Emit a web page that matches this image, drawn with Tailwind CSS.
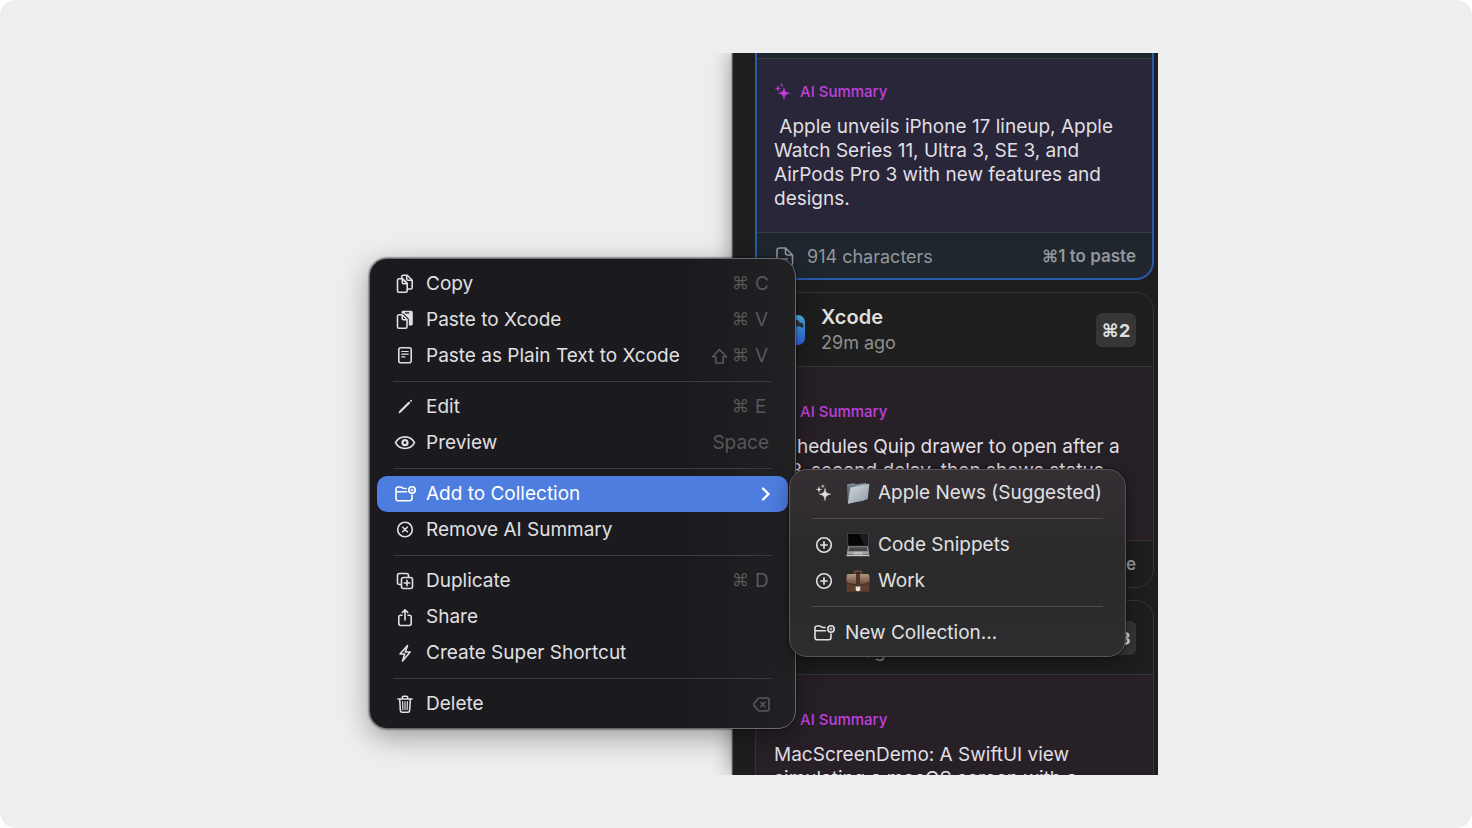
<!DOCTYPE html>
<html lang="en">
<head>
    <meta charset="UTF-8">
    <meta name="viewport" content="width=device-width, initial-scale=1.0">
    <title>Clipboard - Add to Collection</title>
    <script src="https://cdn.jsdelivr.net/npm/@tailwindcss/browser@4"></script>
</head>
<body class="bg-white font-['Inter',sans-serif]">

    <!-- Shared icons -->
    <svg class="absolute h-0 w-0" aria-hidden="true">
        <symbol id="sparkles" viewBox="0 0 16 18">
            <path d="M9 4.500c.5 4 1.500 5 5.600 5.700C10.500 11 9.500 12 9 16.500 8.500 12 7.500 11 3.400 10.200 7.500 9.500 8.500 8.500 9 4.500z" fill="currentColor" stroke="currentColor" stroke-width=".6"/>
            <path d="M3 2.800c.3 1.900.7 2.400 2.600 2.700C3.700 5.800 3.300 6.300 3 8.200 2.700 6.300 2.300 5.800.4 5.500 2.300 5.200 2.700 4.700 3 2.800z" fill="currentColor" stroke="currentColor" stroke-width=".4"/>
            <path d="M6.800.4c.2 1.200.5 1.500 1.700 1.700-1.200.2-1.500.5-1.700 1.700-.2-1.200-.5-1.500-1.700-1.700C6.300 1.900 6.600 1.600 6.800.4z" fill="currentColor" stroke="currentColor" stroke-width=".3"/>
        </symbol>
        <symbol id="folder-plus" viewBox="0 0 24 24">
            <path d="M13 6.500h-2.200c-.7 0-1-.2-1.500-.7-.6-.6-1-.8-1.800-.8H5.200C3.800 5 3 5.800 3 7.200v9.300C3 18 3.800 18.800 5.300 18.800h11.500c1.500 0 2.200-.8 2.200-2.200V13M3 9.800h10.500" fill="none" stroke="currentColor" stroke-width="1.600" stroke-linecap="round" stroke-linejoin="round"/>
            <circle cx="19" cy="8" r="3.200" fill="none" stroke="currentColor" stroke-width="1.600"/>
            <path d="M19 6.600v2.800M17.600 8h2.800" stroke="currentColor" stroke-width="1"/>
        </symbol>
        <symbol id="circle-plus" viewBox="0 0 24 24">
            <circle cx="12" cy="12" r="7.300" fill="none" stroke="currentColor" stroke-width="1.600"/>
            <path d="M12 8.900v6.200M8.900 12h6.200" stroke="currentColor" stroke-width="1.700" stroke-linecap="round"/>
        </symbol>
        <symbol id="doc" viewBox="0 0 18 20">
            <path d="M1 16.500v-13C1 1.900 1.900 1 3.500 1h6L16.500 8v8.500c0 1.600-.9 2.500-2.500 2.500H3.500C1.900 19 1 18.100 1 16.500zM9.500 1v5c0 1.300.7 2 2 2h5M5 12h7M5 15h7" fill="none" stroke="currentColor" stroke-width="1.600" stroke-linejoin="round"/>
        </symbol>
        <linearGradient id="xcode-bg" x1="0" y1="0" x2="0" y2="1">
            <stop offset="0" stop-color="#4db8ea"/>
            <stop offset="1" stop-color="#2f5fe0"/>
        </linearGradient>
        <symbol id="xcode" viewBox="0 0 32 32">
            <rect x="1" y="1" width="30" height="30" rx="7" fill="url(#xcode-bg)"/>
            <path d="M10 9c4-4 11-5 15-2l1 2 2-.5 2 3.500-2 2-2.500-2-2.500 1-2-3-8 1z" fill="#2c3440"/>
            <path d="M17 11l3 2-11 15-3-2z" fill="#20262e"/>
        </symbol>
    </svg>

    <main class="flex h-screen min-h-96 justify-center rounded-2xl bg-[#eeeeee] py-[53px]">
        <div class="relative w-full max-w-[844px] overflow-hidden">

            <!-- Clipboard history -->
            <section class="ml-auto flow-root h-full w-[426px] overflow-hidden border-l border-[#5c5c5c] bg-[#1e1e1e] pr-1 pl-[22px] shadow-[0_0_20px_rgba(0,0,0,0.4),0_0_1px_#000]">
                <div class="-mt-[69px] flex flex-col gap-3">

                    <article class="overflow-hidden rounded-[18px] bg-[#1f262e] outline-2 -outline-offset-2 outline-[#2a59ab]">
                        <header class="flex h-[75px] items-center border-b border-[#363c44] px-[19px]">
                            <h2 class="text-[20px] font-semibold text-[#dedede]">Safari</h2>
                        </header>
                        <div class="h-[174px] border-b border-[#3a3945] bg-[#282638] px-[19px] pt-[23px]">
                            <h3 class="flex items-center gap-[9px] pl-px text-[15px] leading-5 font-medium text-[#c140dd]">
                                <svg class="h-[18px] w-4"><use href="#sparkles"/></svg>AI Summary
                            </h3>
                            <p class="mt-[13px] text-[19px] leading-6 whitespace-nowrap text-[#e0dfe3]">&nbsp;Apple unveils iPhone 17 lineup, Apple<br>Watch Series 11, Ultra 3, SE 3, and<br>AirPods Pro 3 with new features and<br>designs.</p>
                        </div>
                        <footer class="flex h-[47px] items-center pr-[18px] pl-[21px] text-[#93979b]">
                            <svg class="mr-[13px] h-5 w-[18px]"><use href="#doc"/></svg>
                            <span class="text-[18px]">914 characters</span>
                            <span class="ml-auto text-[17px] font-semibold">⌘1 to paste</span>
                        </footer>
                    </article>

                    <article class="overflow-hidden rounded-[18px] bg-[#1e1e1e] outline-1 -outline-offset-1 outline-[#353535]">
                        <header class="flex h-[75px] items-center border-b border-[#353535] pt-[2px] pr-[18px] pl-[19px]">
                            <svg class="mr-[15px] h-8 w-8"><use href="#xcode"/></svg>
                            <div>
                                <h2 class="text-[20px] leading-[26px] font-semibold text-[#dedede]">Xcode</h2>
                                <p class="text-[18px] leading-[26px] text-[#8e8e8e]">29m ago</p>
                            </div>
                            <span class="ml-auto flex h-[34px] w-10 items-center justify-center rounded-md bg-[#363636] text-[18px] font-bold text-[#dedede]">⌘2</span>
                        </header>
                        <div class="h-[174px] border-b border-[#353535] bg-[#272027] px-[19px] pt-[35px]">
                            <h3 class="flex items-center gap-[9px] pl-px text-[15px] leading-5 font-medium text-[#c140dd]">
                                <svg class="h-[18px] w-4"><use href="#sparkles"/></svg>AI Summary
                            </h3>
                            <p class="mt-[13px] text-[19px] leading-6 whitespace-nowrap text-[#e0dfe3]">Schedules Quip drawer to open after a<br>0.3-second delay, then shows status</p>
                        </div>
                        <footer class="flex h-[47px] items-center pr-[18px] pl-[21px] text-[#93979b]">
                            <svg class="mr-[13px] h-5 w-[18px]"><use href="#doc"/></svg>
                            <span class="text-[18px]">286 characters</span>
                            <span class="ml-auto text-[17px] font-semibold">⌘2 to paste</span>
                        </footer>
                    </article>

                    <article class="overflow-hidden rounded-[18px] bg-[#1e1e1e] outline-1 -outline-offset-1 outline-[#353535]">
                        <header class="flex h-[75px] items-center border-b border-[#353535] pt-[2px] pr-[18px] pl-[19px]">
                            <svg class="mr-[15px] h-8 w-8"><use href="#xcode"/></svg>
                            <div>
                                <h2 class="text-[20px] leading-[26px] font-semibold text-[#dedede]">Xcode</h2>
                                <p class="text-[18px] leading-[26px] text-[#8e8e8e]">30m ago</p>
                            </div>
                            <span class="ml-auto flex h-[34px] w-10 items-center justify-center rounded-md bg-[#363636] text-[18px] font-bold text-[#dedede]">⌘3</span>
                        </header>
                        <div class="h-[174px] bg-[#272027] px-[19px] pt-[35px]">
                            <h3 class="flex items-center gap-[9px] pl-px text-[15px] leading-5 font-medium text-[#c140dd]">
                                <svg class="h-[18px] w-4"><use href="#sparkles"/></svg>AI Summary
                            </h3>
                            <p class="mt-[13px] text-[19px] leading-6 whitespace-nowrap text-[#e0dfe3]">MacScreenDemo: A SwiftUI view<br>simulating a macOS screen with a</p>
                        </div>
                    </article>
                </div>
            </section>

            <!-- Context menu -->
            <div role="menu" class="absolute top-[205px] left-[55px] w-[427px] rounded-[18px] border border-[#6a696e] bg-linear-to-r from-[#1b1a1e] from-75% to-[#212023] px-[7px] pt-[7px] pb-[6px] text-[19px] text-[#e0e0e2] shadow-[0_0_2px_#000,0_8px_28px_rgba(0,0,0,0.35)]">
                <button role="menuitem" class="flex h-9 w-full items-center gap-[9px] rounded-[10px] px-4">
                    <svg class="h-6 w-6" viewBox="0 0 24 24" fill="none" stroke="currentColor" stroke-width="1.600" stroke-linejoin="round">
                        <path d="M4.500 8.300c0-1 .5-1.500 1.500-1.500h3.500l4.700 4.700v7.300c0 1-.5 1.500-1.500 1.500H6c-1 0-1.500-.5-1.500-1.500z"/>
                        <path d="M9.300 7v3.600c0 .8.400 1.200 1.200 1.200h3.600"/>
                        <path d="M8.700 6.500V4.700c0-1 .5-1.500 1.500-1.500h4l5 5v7.300c0 1-.5 1.500-1.500 1.500h-3"/>
                        <path d="M13.700 3.300v3.800c0 .8.400 1.200 1.200 1.200h4.200M9.500 6.800l4.500 4.600"/>
                    </svg>
                    Copy
                    <kbd class="mr-[3px] ml-auto flex items-center gap-[6px] font-['Inter'] text-[#58575a]"><span class="text-[17px]">⌘</span><span class="w-[14px] text-left">C</span></kbd>
                </button>
                <button role="menuitem" class="flex h-9 w-full items-center gap-[9px] rounded-[10px] px-4">
                    <svg class="h-6 w-6" viewBox="0 0 24 24" fill="none" stroke="currentColor" stroke-width="1.600" stroke-linejoin="round">
                        <path d="M8.500 4.600c0-1.200.6-1.800 1.800-1.800h7.700c1.200 0 1.800.6 1.800 1.800v11.200c0 1.200-.6 1.800-1.800 1.800h-2.200v-6.800L10.500 5.600h-2z" fill="currentColor" stroke="none"/>
                        <path d="M12 4.900h4.300" stroke="#1b1a1e" stroke-width="1.300"/>
                        <path d="M4.500 8.300c0-1 .5-1.500 1.500-1.500h3.300l4.700 4.700v7.300c0 1-.5 1.500-1.500 1.500H6c-1 0-1.500-.5-1.500-1.500z"/>
                        <path d="M9.200 7v3.600c0 .8.400 1.200 1.200 1.200h3.500"/>
                    </svg>
                    Paste to Xcode
                    <kbd class="mr-[3px] ml-auto flex items-center gap-[6px] font-['Inter'] text-[#58575a]"><span class="text-[17px]">⌘</span><span class="w-[14px] text-left">V</span></kbd>
                </button>
                <button role="menuitem" class="flex h-9 w-full items-center gap-[9px] rounded-[10px] px-4">
                    <svg class="h-6 w-6" viewBox="0 0 24 24" fill="none" stroke="currentColor" stroke-width="1.600" stroke-linecap="round">
                        <rect x="5.800" y="3.800" width="12.400" height="15" rx="2"/>
                        <path d="M8.800 7.500h6.400M8.800 10.200h6.400M8.800 12.900h3" stroke-width="1.200"/>
                    </svg>
                    Paste as Plain Text to Xcode
                    <kbd class="mr-[3px] ml-auto flex items-center gap-[6px] font-['Inter'] text-[#58575a]">
                        <svg class="-mr-[2px] h-[17px] w-[17px]" viewBox="0 0 17 17" fill="none" stroke="currentColor" stroke-width="1.600" stroke-linejoin="round" role="img" aria-label="Shift">
                            <path d="M8.500 1.500l7 7.300h-3.300v6.200H4.800V8.800H1.500z"/>
                        </svg>
                        <span class="text-[17px]">⌘</span><span class="w-[14px] text-left">V</span>
                    </kbd>
                </button>
                <hr class="mx-4 my-[7px] border-[#3b3a3d]">
                <button role="menuitem" class="flex h-9 w-full items-center gap-[9px] rounded-[10px] px-4">
                    <svg class="h-6 w-6" viewBox="0 0 24 24" stroke="currentColor" stroke-linecap="round">
                        <path d="M7.800 16l8.200-8.200" stroke-width="2.200"/>
                        <path d="M6.500 17.400l1-1.200M18 5.900l.2-.2" stroke-width="1.700"/>
                    </svg>
                    Edit
                    <kbd class="mr-[3px] ml-auto flex items-center gap-[6px] font-['Inter'] text-[#58575a]"><span class="text-[17px]">⌘</span><span class="w-[14px] text-left">E</span></kbd>
                </button>
                <button role="menuitem" class="flex h-9 w-full items-center gap-[9px] rounded-[10px] px-4">
                    <svg class="h-6 w-6" viewBox="0 0 24 24" fill="none" stroke="currentColor">
                        <path d="M2.500 11.700C4.500 8 8 5.900 12 5.900s7.500 2.100 9.500 5.800c-2 3.700-5.500 5.800-9.500 5.800s-7.500-2.100-9.500-5.800z" stroke-width="1.700" stroke-linejoin="round"/>
                        <circle cx="12" cy="11.700" r="2.500" stroke-width="2.200"/>
                    </svg>
                    Preview
                    <kbd class="mr-[3px] ml-auto font-['Inter'] text-[#58575a]">Space</kbd>
                </button>
                <hr class="mx-4 my-[7px] border-[#3b3a3d]">
                <button role="menuitem" aria-haspopup="menu" aria-expanded="true" class="flex h-9 w-full items-center gap-[9px] rounded-[10px] bg-[#4d7ddf] px-4 text-white">
                    <svg class="h-6 w-6"><use href="#folder-plus"/></svg>
                    Add to Collection
                    <svg class="mr-px ml-auto h-4 w-[10px]" viewBox="0 0 10 16" fill="none" stroke="currentColor" stroke-width="2.400" stroke-linecap="round" stroke-linejoin="round">
                        <path d="M2 2.500L7.500 8 2 13.500"/>
                    </svg>
                </button>
                <button role="menuitem" class="flex h-9 w-full items-center gap-[9px] rounded-[10px] px-4">
                    <svg class="h-6 w-6" viewBox="0 0 24 24" fill="none" stroke="currentColor" stroke-width="1.600" stroke-linecap="round">
                        <circle cx="12" cy="11.500" r="7.300"/>
                        <path d="M9.700 9.200l4.600 4.600M14.300 9.200l-4.600 4.600"/>
                    </svg>
                    Remove AI Summary
                </button>
                <hr class="mx-4 my-[7px] border-[#3b3a3d]">
                <button role="menuitem" class="flex h-9 w-full items-center gap-[9px] rounded-[10px] px-4">
                    <svg class="h-6 w-6" viewBox="0 0 24 24" fill="none" stroke="currentColor" stroke-width="1.600" stroke-linecap="round">
                        <rect x="8.500" y="8.500" width="11" height="11" rx="2"/>
                        <path d="M14 11.300v5.400M11.300 14h5.400"/>
                        <path d="M8 15.500H6.500c-1.300 0-2-.7-2-2v-7c0-1.300.7-2 2-2h7c1.300 0 2 .7 2 2V8"/>
                    </svg>
                    Duplicate
                    <kbd class="mr-[3px] ml-auto flex items-center gap-[6px] font-['Inter'] text-[#58575a]"><span class="text-[17px]">⌘</span><span class="w-[14px] text-left">D</span></kbd>
                </button>
                <button role="menuitem" class="flex h-9 w-full items-center gap-[9px] rounded-[10px] px-4">
                    <svg class="h-6 w-6" viewBox="0 0 24 24" fill="none" stroke="currentColor" stroke-width="1.600" stroke-linecap="round" stroke-linejoin="round">
                        <path d="M9 10.300H7.700c-1.200 0-1.900.7-1.900 1.900v6.400c0 1.200.7 1.900 1.900 1.900h8.600c1.200 0 1.900-.7 1.900-1.900v-6.400c0-1.200-.7-1.900-1.900-1.900H15"/>
                        <path d="M12 15V5M9.300 7.500L12 4.800l2.700 2.700"/>
                    </svg>
                    Share
                </button>
                <button role="menuitem" class="flex h-9 w-full items-center gap-[9px] rounded-[10px] px-4">
                    <svg class="h-6 w-6" viewBox="0 0 24 24" fill="none" stroke="currentColor" stroke-width="1.600" stroke-linejoin="round">
                        <path d="M14.500 4.500L7 13h4.700l-2.200 7L17.200 11h-4.900z"/>
                    </svg>
                    Create Super Shortcut
                </button>
                <hr class="mx-4 my-[7px] border-[#3b3a3d]">
                <button role="menuitem" class="flex h-9 w-full items-center gap-[9px] rounded-[10px] px-4">
                    <svg class="h-6 w-6" viewBox="0 0 24 24" fill="none" stroke="currentColor" stroke-width="1.600" stroke-linecap="round" stroke-linejoin="round">
                        <path d="M5 7h14M9.300 6.800V5.500c0-.8.500-1.200 1.200-1.200h3c.7 0 1.200.4 1.200 1.200v1.300M6.700 7.200l.7 11.400c.1 1.100.7 1.700 1.800 1.700h5.600c1.100 0 1.700-.6 1.800-1.700l.7-11.400"/>
                        <path d="M9.600 9.700l.3 7.900M12 9.700v7.900M14.400 9.700l-.3 7.900" stroke-width="1.200"/>
                    </svg>
                    Delete
                    <svg class="mr-[2px] ml-auto h-[15px] w-[17px]" viewBox="0 0 17 15" fill="none" stroke="#58575a" stroke-width="1.600" stroke-linejoin="round" stroke-linecap="round" role="img" aria-label="Backspace">
                        <path d="M6.500 1h7.300c1.400 0 2.200.8 2.200 2.200v8.600c0 1.400-.8 2.200-2.200 2.200H6.500c-.7 0-1.100-.2-1.600-.7L1.200 8.600c-.6-.8-.6-1.400 0-2.200L4.900 1.700c.5-.5.900-.7 1.600-.7z"/>
                        <path d="M7.700 5.300l4.300 4.400M12 5.300L7.700 9.700" stroke-width="1.400"/>
                    </svg>
                </button>
            </div>

            <!-- Collections submenu -->
            <div role="menu" class="absolute top-[416px] left-[475px] w-[337px] rounded-[18px] border border-[#57555a] bg-linear-to-b from-[#352f34] via-[#2b2a2b] via-45% to-[#2b2d2e] px-[7px] py-[5px] text-[19px] text-[#e0e0e2] shadow-[0_0_2px_#000,0_6px_20px_rgba(0,0,0,0.35)]">
                <button role="menuitem" class="flex h-9 w-full items-center rounded-[10px] px-[15px]">
                    <svg class="mr-[10px] ml-1 h-[18px] w-4"><use href="#sparkles"/></svg>
                    <svg class="mr-2 ml-1 h-6 w-6" viewBox="0 0 24 24">
                        <linearGradient id="folder-front" x1="0" y1="0" x2="1" y2="1">
                            <stop offset="0" stop-color="#d5dce2"/>
                            <stop offset="1" stop-color="#8e979f"/>
                        </linearGradient>
                        <path d="M1 4.500L1.600 3l7-.9 1 1.200L20 1.800l.6 1.500L18 20 1.900 22z" fill="#66747f"/>
                        <path d="M1 4.500l6.800-.9 1.200 1 10.500-1.500" fill="none" stroke="#93a2ad" stroke-width=".8"/>
                        <path d="M4.500 6.500L22.500 2.800c.6 0 .9.300.8.900l-1.500 13.500c-.1.700-.4 1-1 1.200L2.500 22.800c-.4.100-.6-.1-.6-.6z" fill="url(#folder-front)"/>
                    </svg>
                    Apple News (Suggested)
                </button>
                <hr class="mx-[15px] mt-[7px] mb-2 border-[#4c4a4c]">
                <button role="menuitem" class="flex h-9 w-full items-center rounded-[10px] px-[15px]">
                    <svg class="mr-[6px] h-6 w-6"><use href="#circle-plus"/></svg>
                    <svg class="mr-2 ml-1 h-6 w-6" viewBox="0 0 24 24">
                        <path d="M1.200 0h21.600l-.4 14.500H1.600z" fill="#4c4c4e"/>
                        <path d="M2 .8h20l-.3 12H2.300z" fill="#050505"/>
                        <path d="M13 .8h9l-.3 12h-3.500z" fill="#1c1c1e"/>
                        <path d="M2 13.500h20l1.200 8H.8z" fill="#a3a3a5"/>
                        <path d="M3 14.300h18l.6 4H2.400z" fill="#3d3d40"/>
                        <path d="M2.600 15.700h18.800M2.500 17h19" stroke="#77777a" stroke-width=".5" stroke-dasharray="1 .6"/>
                        <path d="M8 18.800h8l.5 2.700h-9z" fill="#bcbcbe"/>
                        <path d="M.4 21.800h23.200v1.400H.4z" fill="#c9c9cb"/>
                    </svg>
                    Code Snippets
                </button>
                <button role="menuitem" class="flex h-9 w-full items-center rounded-[10px] px-[15px]">
                    <svg class="mr-[6px] h-6 w-6"><use href="#circle-plus"/></svg>
                    <svg class="mr-2 ml-1 h-6 w-6" viewBox="0 0 24 24">
                        <linearGradient id="case-top" x1="0" y1="0" x2="0" y2="1">
                            <stop offset="0" stop-color="#b39680"/>
                            <stop offset="1" stop-color="#6b4a38"/>
                        </linearGradient>
                        <path d="M8.500 5V3.500C8.500 2.600 9 2.200 10 2.200h4c1 0 1.500.4 1.500 1.300V5" fill="none" stroke="#7a5236" stroke-width="1.400"/>
                        <path d="M.6 7.500C.6 5.800 1.300 5 3 5h18c1.700 0 2.400.8 2.400 2.500v14c0 .8-.4 1.200-1.200 1.200H1.800c-.8 0-1.200-.4-1.200-1.200z" fill="#5c3e2f"/>
                        <path d="M.6 7.500C.6 5.800 1.300 5 3 5h18c1.700 0 2.400.8 2.400 2.500V13c-3 3.500-19.800 3.500-22.800 0z" fill="url(#case-top)"/>
                        <path d="M.6 13c3 3.700 19.800 3.700 22.800 0" fill="none" stroke="#3c2519" stroke-width=".8"/>
                        <rect x="10" y="5" width="4" height="13" fill="#4f3325"/>
                        <path d="M9.700 17.500h4.600v3c0 1-.7 1.700-2.300 1.700s-2.300-.7-2.300-1.700z" fill="#e6e3e0"/>
                    </svg>
                    Work
                </button>
                <hr class="mx-[15px] mt-[7px] mb-2 border-[#4c4a4c]">
                <button role="menuitem" class="flex h-9 w-full items-center gap-[9px] rounded-[10px] px-[15px]">
                    <svg class="h-6 w-6"><use href="#folder-plus"/></svg>
                    New Collection...
                </button>
            </div>
        </div>
    </main>
</body>
</html>
